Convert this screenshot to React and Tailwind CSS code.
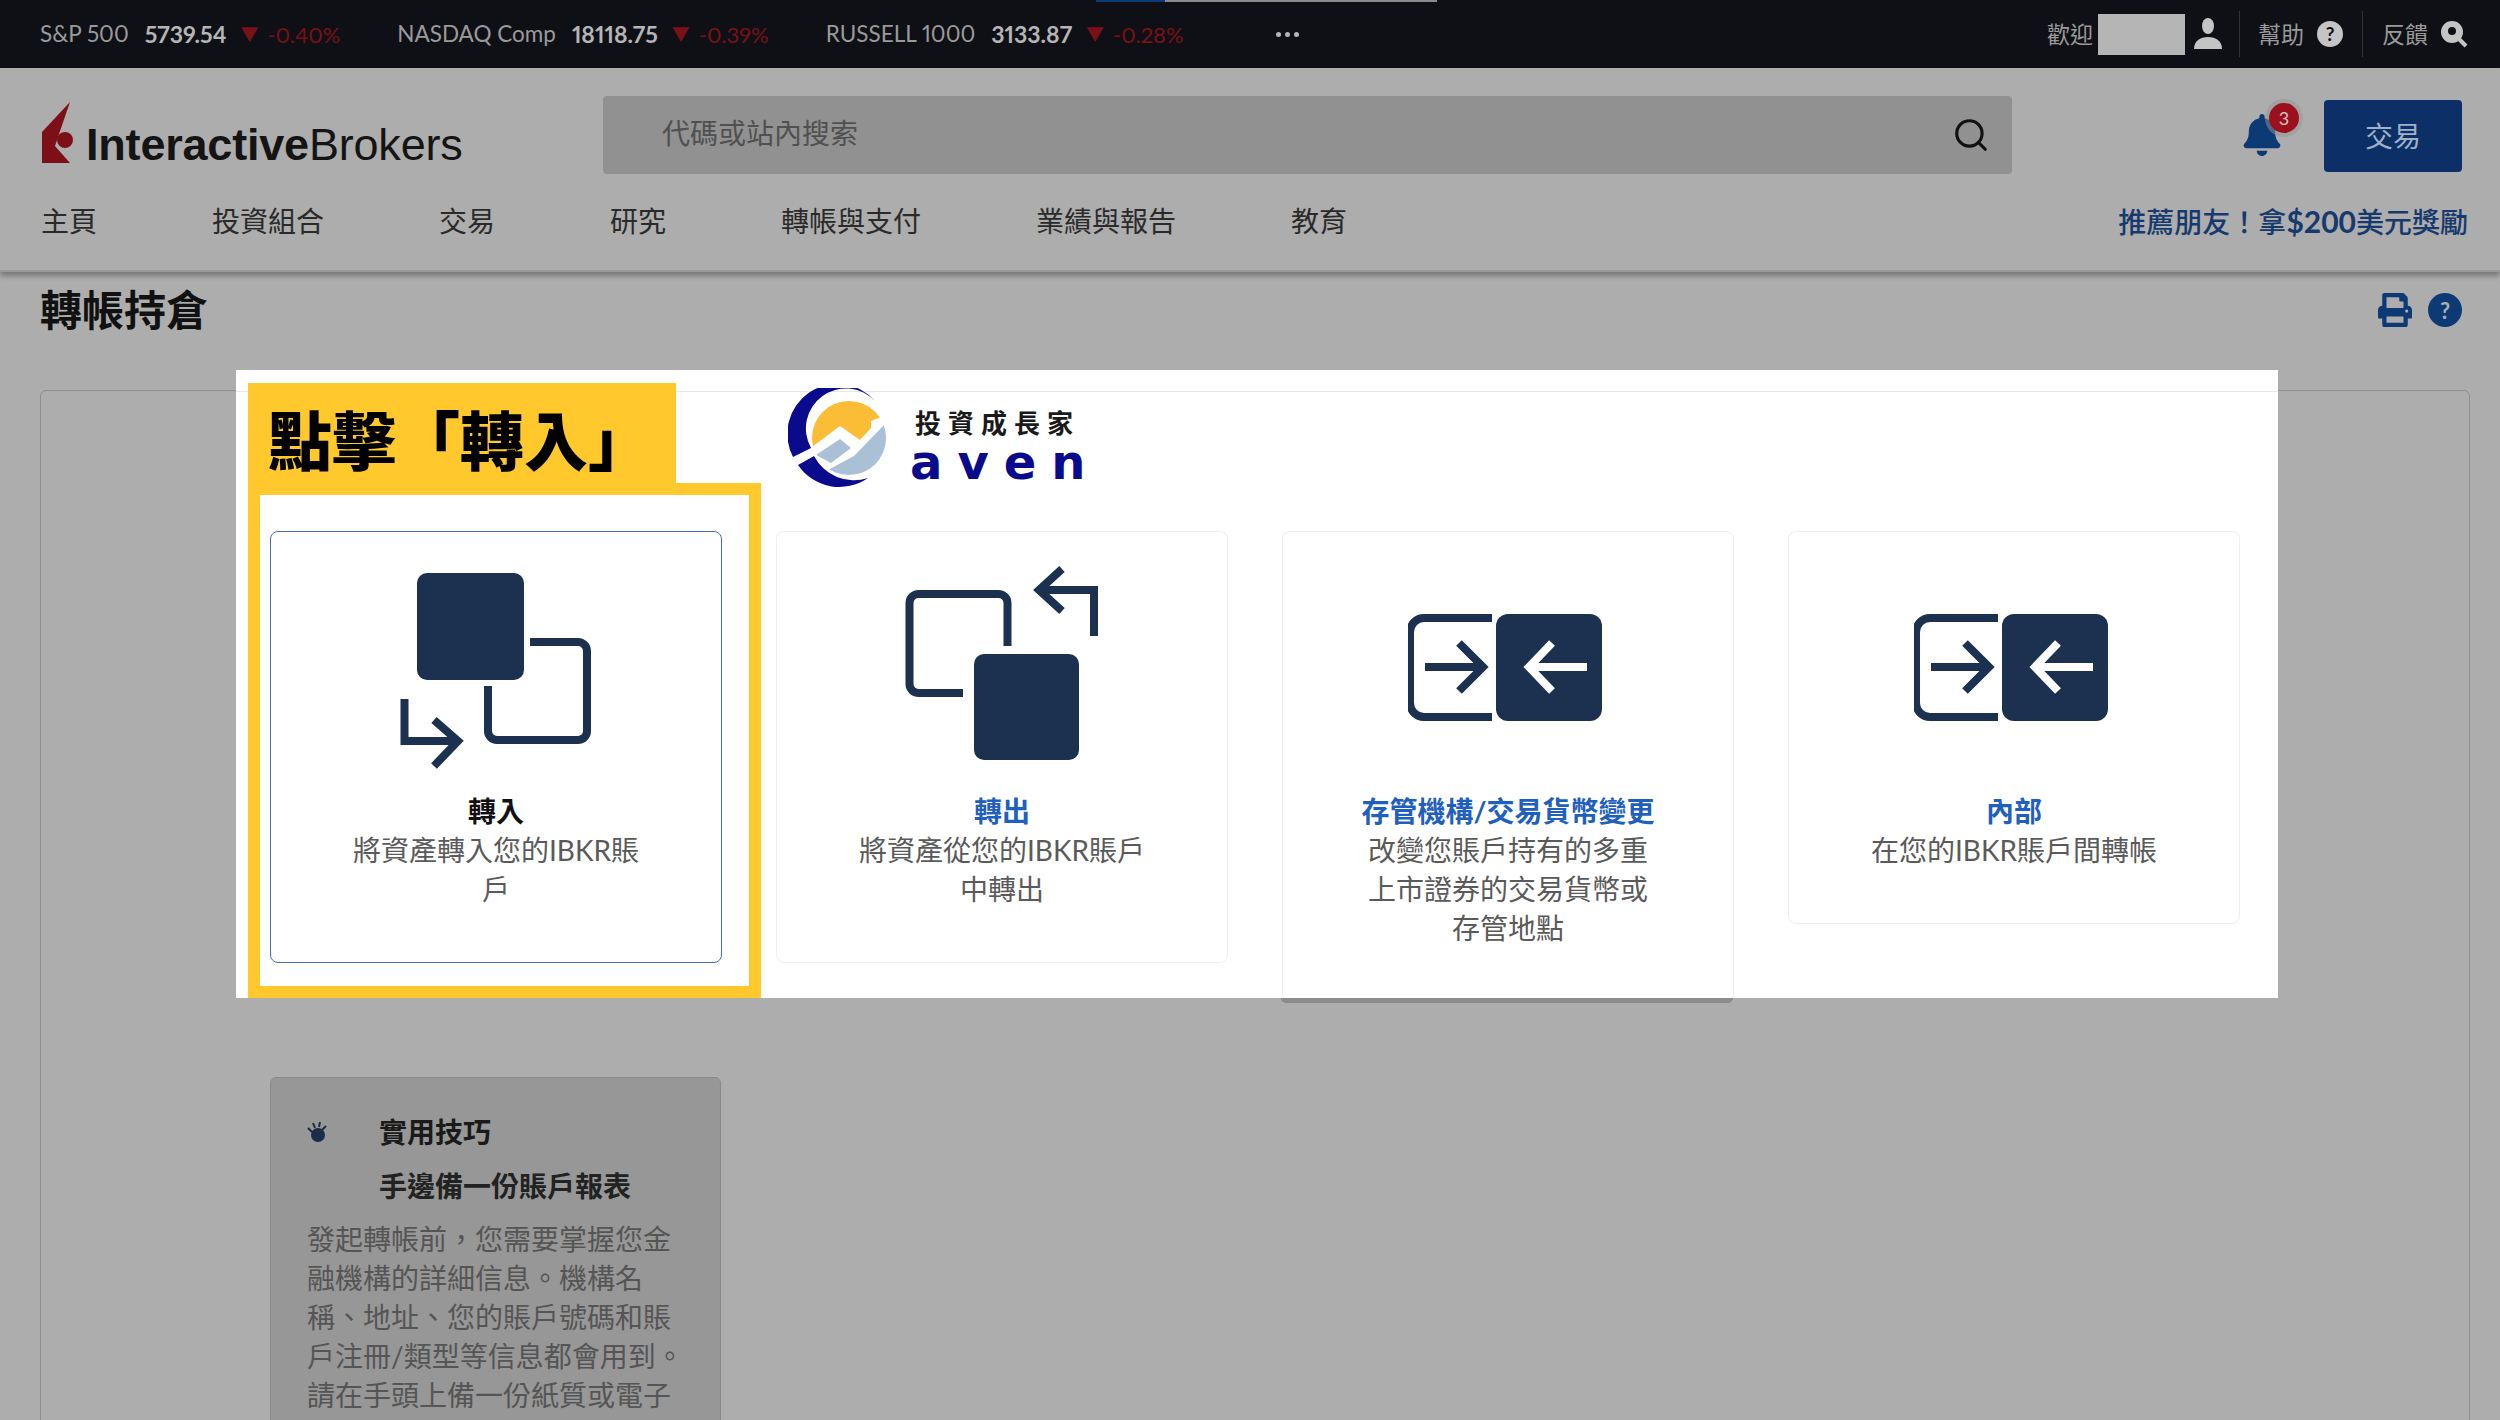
import { FaBell, FaPrint } from 'react-icons/fa'
import { Search } from 'lucide-react'

const FONT = "font-['Lato','Noto_Sans_CJK_TC',sans-serif]"

const TICKERS = [
  { name: 'S&P 500', value: '5739.54', change: '-0.40%' },
  { name: 'NASDAQ Comp', value: '18118.75', change: '-0.39%' },
  { name: 'RUSSELL 1000', value: '3133.87', change: '-0.28%' },
]

const NAV = ['主頁', '投資組合', '交易', '研究', '轉帳與支付', '業績與報告', '教育']

const TIP_LINES = '發起轉帳前，您需要掌握您金融機構的詳細信息。機構名稱、地址、您的賬戶號碼和賬戶注冊/類型等信息都會用到。請在手頭上備一份紙質或電子'

function InIcon() {
  return (
    <svg width="200" height="210" viewBox="0 0 200 210" fill="none" stroke="#1c3050" strokeWidth="8">
      <rect x="21" y="7" width="107" height="107" rx="10" fill="#1c3050" stroke="none" />
      <path d="M134 76H182a9 9 0 0 1 9 9V165a9 9 0 0 1-9 9H101a9 9 0 0 1-9-9V120" />
      <path d="M8.5 133V175H60" />
      <path d="M38 154L62 175L38 200" />
    </svg>
  )
}

function OutIcon() {
  return (
    <svg width="200" height="210" viewBox="0 0 200 210" fill="none" stroke="#1c3050" strokeWidth="8">
      <path d="M105.5 80V37a9 9 0 0 0-9-9H16.5a9 9 0 0 0-9 9V118a9 9 0 0 0 9 9H61" />
      <rect x="72" y="88" width="105" height="106" rx="10" fill="#1c3050" stroke="none" />
      <path d="M192 70V24H140" />
      <path d="M160 3L137 24L160 45" />
    </svg>
  )
}

function SwapIcon() {
  return (
    <svg width="200" height="210" viewBox="4 0 200 210" fill="none" stroke="#1c3050" strokeWidth="8">
      <path d="M88 52H20a14 14 0 0 0-14 14V137a14 14 0 0 0 14 14H88" />
      <rect x="92" y="48" width="106" height="107" rx="12" fill="#1c3050" stroke="none" />
      <path d="M21 101H78" />
      <path d="M55 77L79 101L55 125" />
      <path d="M183 101H126" stroke="#fff" />
      <path d="M148 77L125 101L148 125" stroke="#fff" />
    </svg>
  )
}

const CARDS = [
  { title: '轉入', desc: '將資產轉入您的IBKR賬戶', Icon: InIcon, active: true },
  { title: '轉出', desc: '將資產從您的IBKR賬戶中轉出', Icon: OutIcon },
  { title: '存管機構/交易貨幣變更', desc: '改變您賬戶持有的多重上市證券的交易貨幣或存管地點', Icon: SwapIcon },
  { title: '內部', desc: '在您的IBKR賬戶間轉帳', Icon: SwapIcon },
]

function IbLogo() {
  return (
    <svg className="mt-[6px]" width="32" height="62" viewBox="0 0 32 62">
      <path d="M28 0L0 30V61H28L13 44L17 32Z" fill="#7d0f18" />
      <circle cx="23" cy="38" r="8" fill="#7d0f18" />
    </svg>
  )
}

function GvenMark() {
  return (
    <svg width="100" height="100" viewBox="0 0 100 100">
      <defs>
        <clipPath id="disc">
          <circle cx="61" cy="50" r="37" />
        </clipPath>
      </defs>
      <g clipPath="url(#disc)">
        <path d="M20 62L52 38L72 52L83 40V33L98 27L100 0H20Z" fill="#fbbd36" />
        <path d="M28 67L52 51L63 60L43 75Z" fill="#a9c0d6" />
        <path d="M40 82L66 68L100 33V100H30Z" fill="#a9c0d6" />
      </g>
      <path d="M87 13A50 50 0 0 0 5 69L23 60A40 40 0 0 1 87 13Z" fill="#0a0a8c" />
      <path d="M10 77L26 68A45 45 0 0 0 80 90A50 50 0 0 1 10 77Z" fill="#0a0a8c" />
    </svg>
  )
}

function TransferCard({ title, desc, Icon, active }) {
  return (
    <div
      className={`w-[452px] shrink-0 rounded-[8px] border bg-white pt-[34px] pb-[53px] flex flex-col items-center text-center ${
        active ? 'border-[#3f6fc4]' : 'border-[#eeeeee]'
      }`}
    >
      <Icon />
      <div className={`mt-[16px] text-[28px] leading-[39px] font-bold ${active ? 'text-[#111111]' : 'text-[#1f5fbd]'}`}>{title}</div>
      <div className="w-[300px] text-[28px] leading-[39px] text-[#5a5a5a]">{desc}</div>
    </div>
  )
}

export default function App() {
  return (
    <div className={`relative w-[2500px] h-[1420px] overflow-hidden bg-[#adadad] ${FONT}`}>
      {/* Ticker bar */}
      <div className="relative h-[68px] bg-[#0f1015] flex items-center pl-[40px] pr-[32px] text-[#9a9a9a] text-[22.5px] proportional-nums">
        <div className="absolute left-[1096px] top-0 h-[2px] w-[341px] flex">
          <div className="w-[69px] bg-[#0b3a75]" />
          <div className="flex-1 bg-[#8a8a8a]" />
        </div>
        {TICKERS.map(t => (
          <div key={t.name} className="flex items-center mr-[57px]">
            <span>{t.name}</span>
            <span className="ml-[16px] text-[23px] font-bold text-[#b5b5b5]">{t.value}</span>
            <span className="ml-[14px] text-[#7a1018] text-[18px]">▼</span>
            <span className="ml-[9px] text-[22px] text-[#7a1018]">{t.change}</span>
          </div>
        ))}
        <div className="ml-[35px] flex gap-[4px]">
          <span className="w-[5px] h-[5px] rounded-full bg-[#b5b5b5]" />
          <span className="w-[5px] h-[5px] rounded-full bg-[#b5b5b5]" />
          <span className="w-[5px] h-[5px] rounded-full bg-[#b5b5b5]" />
        </div>

        <div className="ml-auto flex items-center text-[23px] text-[#9a9a9a]">
          <span>歡迎</span>
          <div className="ml-[5px] w-[87px] h-[41px] bg-[#b5b5b5]" />
          <svg className="ml-[8px]" width="30" height="32" viewBox="0 0 30 32" fill="#c4c4c4">
            <ellipse cx="15" cy="8" rx="6" ry="8" />
            <path d="M1 31C1 23 7 19 15 19S29 23 29 31Z" />
          </svg>
          <div className="ml-[16px] w-px h-[46px] bg-[#33343a]" />
          <span className="ml-[18px]">幫助</span>
          <span className="ml-[13px] w-[26px] h-[26px] rounded-full bg-[#c4c4c4] text-[#0f1015] text-[19px] font-bold flex items-center justify-center">?</span>
          <div className="ml-[19px] w-px h-[46px] bg-[#33343a]" />
          <span className="ml-[19px]">反饋</span>
          <svg className="ml-[12px]" width="28" height="28" viewBox="0 0 28 28" fill="none">
            <circle cx="12" cy="12" r="11" fill="#c4c4c4" />
            <circle cx="12" cy="11" r="4" fill="#0f1015" />
            <path d="M19 19L26 26" stroke="#c4c4c4" strokeWidth="4" />
          </svg>
        </div>
      </div>

      {/* Header */}
      <div className="h-[204px] border-b-[2px] border-[#9a9a9a] shadow-[0_4px_5px_rgba(0,0,0,0.3)] relative">
        <div className="flex items-start pt-[28px] h-[133px]">
          <div className="w-[603px] shrink-0 pl-[42px] flex items-start h-[78px]">
            <IbLogo />
            <span className="ml-[12px] mt-[23px] font-['Liberation_Sans',sans-serif] text-[45px] leading-[52px] text-[#141414] tracking-[-0.2px]">
              <span className="font-bold">Interactive</span>Brokers
            </span>
          </div>
          <div className="w-[1409px] h-[78px] rounded-[4px] bg-[#919191] flex items-center pl-[59px] pr-[22px]">
            <span className="text-[28px] text-[#505050] mt-[-5px]">代碼或站內搜索</span>
            <Search className="ml-auto text-[#111111]" size={38} strokeWidth={2} />
          </div>
          <div className="relative ml-[229px] mt-[18px] text-[#0b3a75]">
            <FaBell size={42} />
            <span className="absolute left-[28px] top-[-11px] w-[30px] h-[30px] rounded-full bg-[#9c0f1d] text-[#c9c9c9] text-[18px] flex items-center justify-center shadow-[0_0_0_4px_rgba(150,150,150,0.5)]">3</span>
          </div>
          <div className="ml-[41px] mt-[4px] w-[138px] h-[72px] rounded-[4px] bg-[#0b2f66] text-[#9fb0c8] text-[28px] flex items-center justify-center">交易</div>
        </div>
        <div className="flex items-center h-[40px] pl-[41px] pr-[32px] text-[28px] text-[#2a2a2a]">
          <div className="flex gap-[115px]">
            {NAV.map(item => <span key={item}>{item}</span>)}
          </div>
          <span className="ml-auto text-[#173a6e] font-medium">推薦朋友！拿<span className="font-bold text-[30px]">$200</span>美元獎勵</span>
        </div>
      </div>

      {/* Page title */}
      <div className="h-[118px] pl-[40px] pr-[38px] pt-[12px] flex items-start">
        <h1 className="text-[42px] leading-[52px] font-bold text-[#111111]">轉帳持倉</h1>
        <div className="ml-auto flex items-center gap-[16px] pt-[9px] text-[#0d3a75]">
          <FaPrint size={34} />
          <span className="w-[34px] h-[34px] rounded-full bg-[#0d3a75] text-[#adadad] text-[22px] font-bold flex items-center justify-center">?</span>
        </div>
      </div>

      {/* Panel with tips */}
      <div className="ml-[40px] mr-[30px] h-[1100px] border border-[#8f8f8f] rounded-[6px] pl-[229px] pt-[686px]">
        <div className="w-[451px] h-[500px] rounded-[6px] border border-[#8a8a8a] bg-[#979797] px-[36px] pt-[34px]">
          <div className="flex items-center h-[39px]">
            <svg width="20" height="20" viewBox="0 0 20 20" fill="#1c2b4a">
              <circle cx="11" cy="13" r="7" />
              <path d="M1 6L5 10M6 1L8 6M13 0L12 5M19 4L15 8" stroke="#1c2b4a" strokeWidth="2" />
            </svg>
            <span className="ml-[52px] text-[28px] font-bold text-[#1a1a1a]">實用技巧</span>
          </div>
          <div className="mt-[16px] ml-[72px] text-[28px] leading-[39px] font-bold text-[#222222]">手邊備一份賬戶報表</div>
          <p className="mt-[14px] text-[28px] leading-[39px] text-[#555555]">{TIP_LINES}</p>
        </div>
      </div>

      {/* Dimmed edge of the third card, below the highlight */}
      <div className="absolute left-[1281px] top-[998px] w-[452px] h-[5px] rounded-b-[6px] bg-[#8c8c8c]" />

      {/* Highlighted white overlay */}
      <div className="absolute left-[236px] top-[370px] w-[2042px] h-[628px] bg-white overflow-hidden">
        <div className="absolute left-0 right-0 top-[21px] h-px bg-[#e8e8e8]" />
        <div className="flex items-start gap-[54px] pl-[34px] pt-[161px]">
          {CARDS.map(card => <TransferCard key={card.title} {...card} />)}
        </div>

        <div className="absolute left-[12px] top-[113px] w-[513px] h-[515px] border-[12px] border-[#ffc92e]" />
        <div className="absolute left-[12px] top-[13px] w-[428px] h-[112px] bg-[#ffc92e] pl-[20px] pt-[23px] text-[64px] leading-[70px] font-black text-black whitespace-nowrap">
          點擊「轉入」
        </div>

        <div className="absolute left-[552px] top-[18px]">
          <GvenMark />
        </div>
        <div className="absolute left-[679px] top-[37px] text-[26px] leading-[32px] font-bold tracking-[7px] text-[#1a1a1a] whitespace-nowrap">投資成長家</div>
        <div className="absolute left-[674px] top-[70px] font-['DejaVu_Sans',sans-serif] font-bold text-[48px] leading-[44px] tracking-[15px] text-[#0a0a8c]">aven</div>
      </div>
    </div>
  )
}
